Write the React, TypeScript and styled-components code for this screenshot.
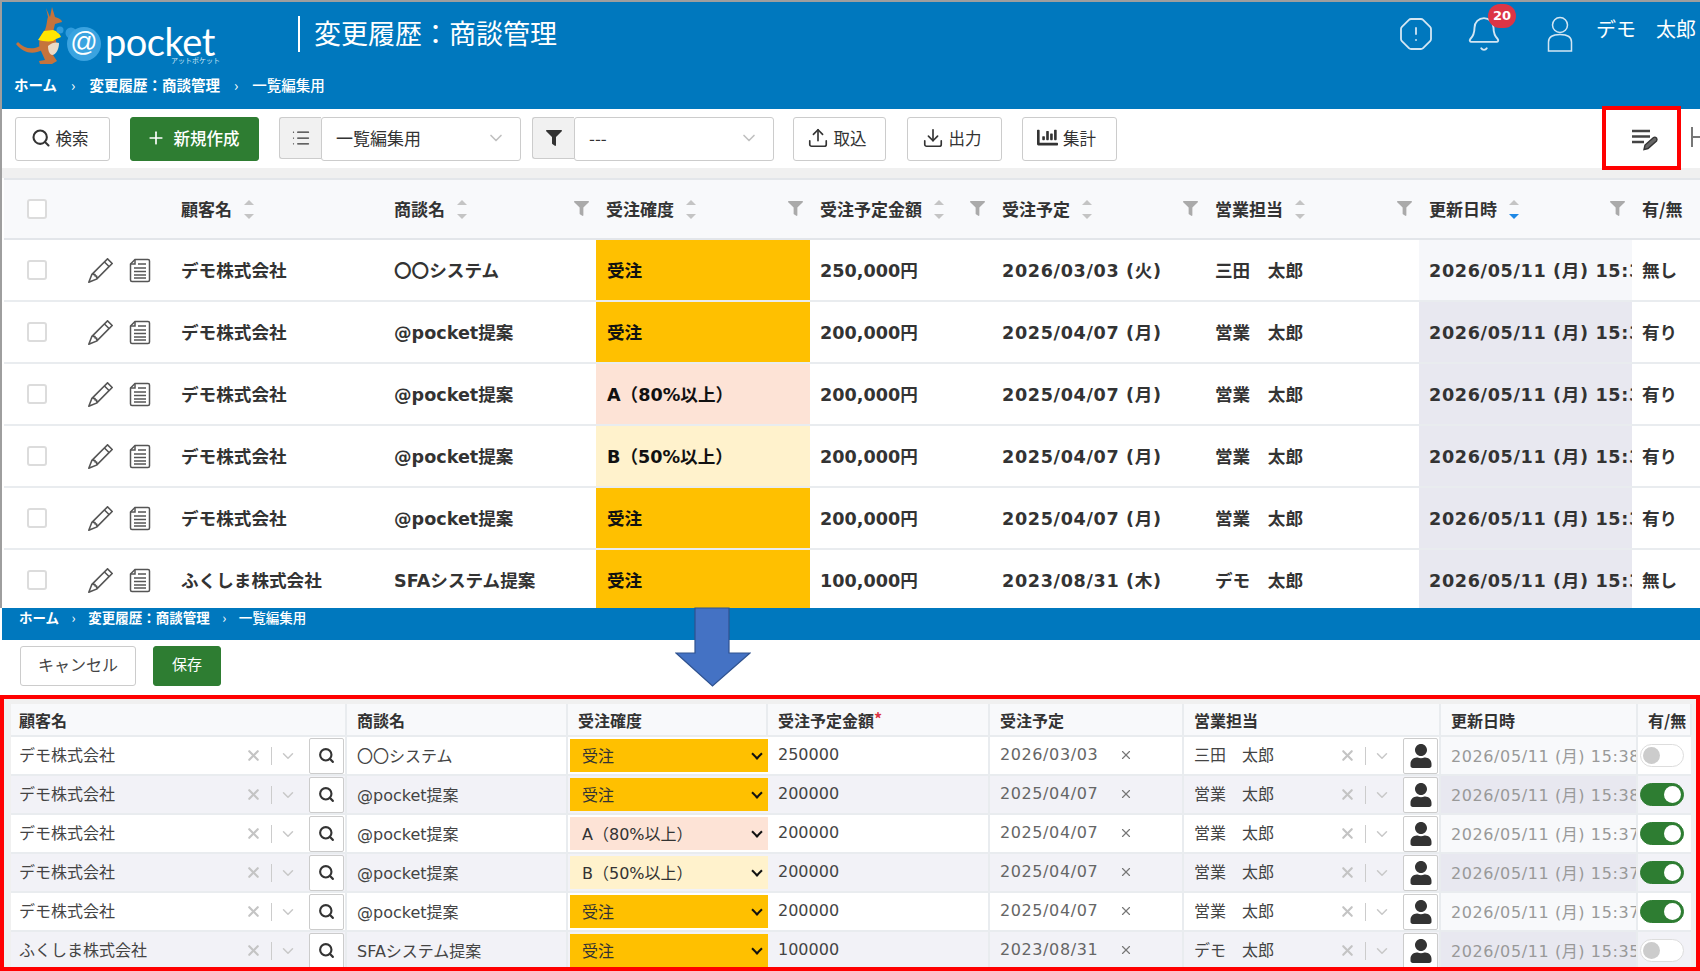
import { Bell, ChevronDown, Download, List, OctagonAlert, Plus, Search, Upload, X } from 'lucide-react'
import { BsPencil } from 'react-icons/bs'
import { FaChartBar, FaFilter, FaUser } from 'react-icons/fa'
import { createGlobalStyle, styled } from 'styled-components'

type Level = 'won' | 'a' | 'b'

const levelLabel: Record<Level, string> = { won: '受注', a: 'A（80%以上）', b: 'B（50%以上）' }
const levelColor: Record<Level, string> = { won: '#ffc000', a: '#fde3d6', b: '#fff2cc' }

const topRows = [
  { customer: 'デモ株式会社', deal: '〇〇システム', level: 'won', amount: '250,000円', date: '2026/03/03 (火)', owner: '三田　太郎', flag: '無し' },
  { customer: 'デモ株式会社', deal: '@pocket提案', level: 'won', amount: '200,000円', date: '2025/04/07 (月)', owner: '営業　太郎', flag: '有り' },
  { customer: 'デモ株式会社', deal: '@pocket提案', level: 'a', amount: '200,000円', date: '2025/04/07 (月)', owner: '営業　太郎', flag: '有り' },
  { customer: 'デモ株式会社', deal: '@pocket提案', level: 'b', amount: '200,000円', date: '2025/04/07 (月)', owner: '営業　太郎', flag: '有り' },
  { customer: 'デモ株式会社', deal: '@pocket提案', level: 'won', amount: '200,000円', date: '2025/04/07 (月)', owner: '営業　太郎', flag: '有り' },
  { customer: 'ふくしま株式会社', deal: 'SFAシステム提案', level: 'won', amount: '100,000円', date: '2023/08/31 (木)', owner: 'デモ　太郎', flag: '無し' },
] as const

const editRows = [
  { customer: 'デモ株式会社', deal: '〇〇システム', level: 'won', amount: '250000', date: '2026/03/03', owner: '三田　太郎', updated: '2026/05/11 (月) 15:38', on: false },
  { customer: 'デモ株式会社', deal: '@pocket提案', level: 'won', amount: '200000', date: '2025/04/07', owner: '営業　太郎', updated: '2026/05/11 (月) 15:38', on: true },
  { customer: 'デモ株式会社', deal: '@pocket提案', level: 'a', amount: '200000', date: '2025/04/07', owner: '営業　太郎', updated: '2026/05/11 (月) 15:37', on: true },
  { customer: 'デモ株式会社', deal: '@pocket提案', level: 'b', amount: '200000', date: '2025/04/07', owner: '営業　太郎', updated: '2026/05/11 (月) 15:37', on: true },
  { customer: 'デモ株式会社', deal: '@pocket提案', level: 'won', amount: '200000', date: '2025/04/07', owner: '営業　太郎', updated: '2026/05/11 (月) 15:37', on: true },
  { customer: 'ふくしま株式会社', deal: 'SFAシステム提案', level: 'won', amount: '100000', date: '2023/08/31', owner: 'デモ　太郎', updated: '2026/05/11 (月) 15:35', on: false },
] as const

const Kangaroo = () => (
  <svg width="72" height="62" viewBox="0 0 72 62">
    <path d="M1 39 C8 48 18 50 27 45 L25 41 C18 45 9 44 3 37 Z" fill="#c5733c" />
    <path d="M31 3 L35 12 L37 2 L40 12 C44 13 47 15 47 17 L40 19 L38 27 C42 34 43 44 38 50 L42 56 L37 59 L25 59 L24 56 L30 55 L26 46 C22 38 25 30 30 25 C32 20 32 14 33 12 Z" fill="#c5733c" />
    <path d="M29 26 L38 25 C42 26 45 29 46 32 L41 34 L38 36 C33 37 27 36 23 35 Z" fill="#ffe600" />
    <path d="M33 41 C37 37 42 37 44 38 C44 44 41 50 37 50 C34 49 33 45 33 41 Z" fill="#eadbc8" />
    <circle cx="45" cy="25" r="3.5" fill="#2f9bdc" />
    <circle cx="56" cy="28" r="5.5" fill="#2f9bdc" />
  </svg>
)

const DocIcon = () => (
  <svg width="22" height="25" viewBox="0 0 22 25" fill="none" stroke="#555" strokeWidth="1.5">
    <path d="M6 1.5 H19 Q20.5 1.5 20.5 3 V22 Q20.5 23.5 19 23.5 H3 Q1.5 23.5 1.5 22 V6 Z" />
    <path d="M6 1.5 V6 H1.5 M9 6 H17 M5 10 H17 M5 13.5 H17 M5 17 H17 M5 20 H17" />
  </svg>
)

const UserOutline = () => (
  <svg width="26" height="36" viewBox="0 0 26 36" fill="none" stroke="#d3e6f3" strokeWidth="1.5">
    <circle cx="13" cy="9" r="7.5" />
    <path d="M1.5 35 V26 C1.5 21 6 18.5 13 18.5 S24.5 21 24.5 26 V35 Z" />
  </svg>
)

// 一覧編集の切替アイコン
const ListEditIcon = () => (
  <svg width="28" height="24" viewBox="0 0 28 24" fill="none">
    <path d="M1 3 H19 M1 8.5 H19 M1 14 H13" stroke="#444" strokeWidth="2.4" />
    <path d="M13 21.5 L14 17 L22.5 9.5 Q24 8.5 25.5 10 Q26.5 11.5 25.5 13 L17 20.5 Z" fill="#666" stroke="#333" strokeWidth="1.4" />
  </svg>
)

const Sort = ({ active = false }: { active?: boolean }) => (
  <SortBox>
    <SortUp />
    <SortDown $active={active} />
  </SortBox>
)

const TopHead = ({ label, active, filter = true }: { label: string; active?: boolean; filter?: boolean }) => (
  <TopHeadCell>
    {label}
    <Sort active={active} />
    {filter && (
      <FilterMark>
        <FaFilter size={15} />
      </FilterMark>
    )}
  </TopHeadCell>
)

const Picker = ({ name, person = false }: { name: string; person?: boolean }) => (
  <PickerCell>
    <PickerText>{name}</PickerText>
    <X size={17} color="#c4c4c4" strokeWidth={3} />
    <PickerBar />
    <ChevronDown size={18} color="#c8c8c8" />
    <PickerButton>{person ? <FaUser size={24} color="#333" /> : <Search size={17} color="#333" strokeWidth={3} />}</PickerButton>
  </PickerCell>
)

function App() {
  return (
    <Page>
      <GlobalStyle />
      <TopSection>
        <Header>
          <HeaderMain>
            <Logo>
              <Kangaroo />
              <AtBadge>@</AtBadge>
              <LogoWord>pocket</LogoWord>
              <LogoKana>アットポケット</LogoKana>
            </Logo>
            <PageTitle>変更履歴：商談管理</PageTitle>
            <HeaderTools>
              <OctagonAlert size={36} color="#d3e6f3" strokeWidth={1.2} />
              <BellBox>
                <Bell size={38} color="#d3e6f3" strokeWidth={1.2} />
                <BellBadge>20</BellBadge>
              </BellBox>
              <UserOutline />
              <UserName>デモ　太郎</UserName>
            </HeaderTools>
          </HeaderMain>
          <Crumbs>
            <span>ホーム</span>
            <CrumbSep>›</CrumbSep>
            <span>変更履歴：商談管理</span>
            <CrumbSep>›</CrumbSep>
            <span>一覧編集用</span>
          </Crumbs>
        </Header>
        <Toolbar>
          <ToolButton $width={95}>
            <Search size={20} strokeWidth={2.5} />
            検索
          </ToolButton>
          <GreenButton>
            <Plus size={20} />
            新規作成
          </GreenButton>
          <SelectGroup>
            <SelectPrefix>
              <List size={20} strokeWidth={1.5} />
            </SelectPrefix>
            <SelectValue>
              一覧編集用
              <ChevronDown size={20} color="#c0c0c0" />
            </SelectValue>
          </SelectGroup>
          <SelectGroup>
            <SelectPrefix>
              <FaFilter size={16} color="#333" />
            </SelectPrefix>
            <SelectValue>
              ---
              <ChevronDown size={20} color="#c0c0c0" />
            </SelectValue>
          </SelectGroup>
          <ToolButton $width={93} $lead={8}>
            <Upload size={22} strokeWidth={1.8} />
            取込
          </ToolButton>
          <ToolButton $width={95} $lead={21}>
            <Download size={22} strokeWidth={1.8} />
            出力
          </ToolButton>
          <ToolButton $width={95} $lead={20}>
            <FaChartBar size={21} />
            集計
          </ToolButton>
          <EditToggle>
            <ListEditIcon />
          </EditToggle>
          <CollapseMark />
        </Toolbar>
        <GapStrip />
        <TopTable>
          <TopHeadRow>
            <TopHeadCheck>
              <CheckBox />
            </TopHeadCheck>
            <TopHead label="顧客名" filter={false} />
            <TopHead label="商談名" />
            <TopHead label="受注確度" />
            <TopHead label="受注予定金額" />
            <TopHead label="受注予定" />
            <TopHead label="営業担当" />
            <TopHead label="更新日時" active />
            <TopHeadCell>有/無</TopHeadCell>
          </TopHeadRow>
          {topRows.map((row, index) => (
            <TopRow key={index}>
              <RowActions>
                <CheckBox />
                <PencilSlot>
                  <BsPencil size={25} color="#555" />
                </PencilSlot>
                <DocIcon />
              </RowActions>
              <TopCell>{row.customer}</TopCell>
              <TopCell>{row.deal}</TopCell>
              <LevelCell $level={row.level}>{levelLabel[row.level]}</LevelCell>
              <TopCell>{row.amount}</TopCell>
              <TopDateCell>{row.date}</TopDateCell>
              <TopCell>{row.owner}</TopCell>
              <UpdatedCell $first={index === 0}>2026/05/11 (月) 15:38</UpdatedCell>
              <TopCell>{row.flag}</TopCell>
            </TopRow>
          ))}
        </TopTable>
      </TopSection>
      <EditBand>
        <span>ホーム</span>
        <BandSep>›</BandSep>
        <span>変更履歴：商談管理</span>
        <BandSep>›</BandSep>
        <span>一覧編集用</span>
      </EditBand>
      <EditBar>
        <CancelButton>キャンセル</CancelButton>
        <SaveButton>保存</SaveButton>
      </EditBar>
      <EditFrame>
        <EditHeadRow>
          <EditHeadCell>顧客名</EditHeadCell>
          <EditHeadCell>商談名</EditHeadCell>
          <EditHeadCell>受注確度</EditHeadCell>
          <EditHeadCell>
            受注予定金額<Required>*</Required>
          </EditHeadCell>
          <EditHeadCell>受注予定</EditHeadCell>
          <EditHeadCell>営業担当</EditHeadCell>
          <EditHeadCell>更新日時</EditHeadCell>
          <EditHeadCell>有/無</EditHeadCell>
        </EditHeadRow>
        {editRows.map((row, index) => (
          <EditRow key={index} $striped={index % 2 === 1}>
            <Picker name={row.customer} />
            <EditCell>{row.deal}</EditCell>
            <LevelSlot>
              <LevelSelect $level={row.level}>
                {levelLabel[row.level]}
                <SelectCaret />
              </LevelSelect>
            </LevelSlot>
            <EditCell>{row.amount}</EditCell>
            <DateCell>
              {row.date}
              <X size={14} color="#777" />
            </DateCell>
            <Picker name={row.owner} person />
            <ReadonlyCell $striped={index % 2 === 1}>{row.updated}</ReadonlyCell>
            <SwitchCell>
              <Switch $on={row.on}>
                <SwitchKnob $on={row.on} />
              </Switch>
            </SwitchCell>
          </EditRow>
        ))}
      </EditFrame>
      <ToggleCallout />
      <DownArrow width="76" height="80" viewBox="0 0 76 80">
        <path d="M20 1 H54 V46 H75 L37.5 79 L1 46 H20 Z" fill="#4472c4" stroke="#2f528f" strokeWidth="1.2" />
      </DownArrow>
    </Page>
  )
}

export default App

// #region styles

const GlobalStyle = createGlobalStyle`
  html, body {
    margin: 0;
    padding: 0;
    background: #fff;
    overflow: hidden;
  }
  * {
    box-sizing: border-box;
  }
`

const Page = styled.div`
  position: relative;
  width: 1700px;
  height: 971px;
  overflow: hidden;
  display: flex;
  flex-direction: column;
  color: #333;
  font-family: 'DejaVu Sans', 'Noto Sans CJK JP', sans-serif;
`

const TopSection = styled.div`
  height: 608px;
  overflow: hidden;
  flex: none;
  border-top: 2px solid #9e9e9e;
  border-left: 2px solid #9e9e9e;
`

const Header = styled.header`
  height: 107px;
  background: #0078be;
  color: #fff;
  display: flex;
  flex-direction: column;
`

const HeaderMain = styled.div`
  height: 68px;
  display: flex;
  align-items: center;
  padding-left: 13px;
`

const Logo = styled.div`
  position: relative;
  width: 283px;
  display: flex;
  align-items: flex-end;
  height: 62px;
`

const AtBadge = styled.span`
  width: 34px;
  height: 34px;
  margin: 0 0 6px -20px;
  border-radius: 50%;
  background: #3aa3e0;
  color: #fff;
  font: 400 27px/31px 'Liberation Sans', sans-serif;
  text-align: center;
`

const LogoWord = styled.span`
  margin: 0 0 11px 4px;
  font: 400 38px/30px 'Lato', sans-serif;
  letter-spacing: -0.5px;
`

const LogoKana = styled.span`
  position: absolute;
  left: 156px;
  bottom: 3px;
  font: 400 7px/7px 'Noto Sans CJK JP', sans-serif;
  color: #cfe6f5;
`

const PageTitle = styled.h1`
  margin: -4px 0 0;
  height: 36px;
  padding-left: 14px;
  border-left: 2px solid #fff;
  font: 400 27px/34px 'Noto Sans CJK JP', sans-serif;
`

const HeaderTools = styled.div`
  margin: -4px 0 0 auto;
  display: flex;
  align-items: center;
  gap: 0;
  white-space: nowrap;
`

const BellBox = styled.div`
  position: relative;
  display: flex;
  margin: 0 44px 0 31px;
`

const BellBadge = styled.span`
  position: absolute;
  top: -11px;
  right: -13px;
  width: 28px;
  height: 24px;
  border-radius: 12px;
  background: #dc3545;
  color: #fff;
  font: 700 13px/24px 'DejaVu Sans', sans-serif;
  text-align: center;
`

const UserName = styled.span`
  margin: -10px 4px 0 23px;
  font: 400 20px/28px 'Noto Sans CJK JP', sans-serif;
`

const Crumbs = styled.nav`
  display: flex;
  align-items: center;
  padding-left: 12px;
  height: 30px;
  font: 700 14.5px/20px 'Noto Sans CJK JP', sans-serif;
  & > span:last-child {
    font-weight: 500;
  }
`

const CrumbSep = styled.i`
  margin: 0 14px;
  font-style: normal;
  font-weight: 400;
`

const BandSep = styled(CrumbSep)`
  margin: 0 12.5px;
`

const Toolbar = styled.div`
  height: 59px;
  padding: 8px 0 0 13px;
  display: flex;
  align-items: flex-start;
  background: #fff;
  font: 400 16.5px/22px 'Noto Sans CJK JP', sans-serif;
`

const ToolButton = styled.button<{ $width: number; $lead?: number }>`
  width: ${(p) => p.$width}px;
  height: 44px;
  margin-left: ${(p) => p.$lead ?? 0}px;
  padding: 0 6px 3px 0;
  display: flex;
  align-items: center;
  justify-content: center;
  gap: 5px;
  background: #fff;
  border: 1px solid #ccc;
  border-radius: 3px;
  color: #333;
  font: inherit;
`

const GreenButton = styled.button`
  width: 129px;
  height: 44px;
  margin: 0 20px;
  padding: 0 4px 3px 0;
  display: flex;
  align-items: center;
  justify-content: center;
  gap: 8px;
  background: #2e7d32;
  border: 1px solid #2e7d32;
  border-radius: 3px;
  color: #fff;
  font: 500 16.5px/22px 'Noto Sans CJK JP', sans-serif;
`

const SelectGroup = styled.div`
  width: 242px;
  height: 44px;
  margin-right: 11px;
  display: flex;
`

const SelectPrefix = styled.div`
  width: 42px;
  height: 42px;
  display: flex;
  align-items: center;
  justify-content: center;
  background: #f1f1f1;
  border: 1px solid #ccc;
  border-right: 0;
  border-radius: 3px 0 0 3px;
`

const SelectValue = styled.div`
  flex: 1;
  display: flex;
  align-items: center;
  justify-content: space-between;
  padding: 0 14px 3px;
  border: 1px solid #ccc;
  border-radius: 3px;
  font-size: 17px;
`

const EditToggle = styled.div`
  margin-left: auto;
  padding-top: 11px;
  display: flex;
`

const CollapseMark = styled.span`
  width: 9px;
  height: 20px;
  margin: 10px 0 0 32px;
  border-left: 2px solid #777;
  background: linear-gradient(#777, #777) left center / 100% 2px no-repeat;
`

const GapStrip = styled.div`
  height: 10px;
  background: #f0f0f0;
`

const TopTable = styled.div`
  margin-left: 2px;
  font-weight: 700;
`

const topColumns = '167px 213px 212px 214px 182px 213px 214px 213px 68px'

const TopHeadRow = styled.div`
  height: 62px;
  display: grid;
  grid-template-columns: ${topColumns};
  background: #f8f9fb;
  border-top: 2px solid #e3e6ea;
  border-bottom: 2px solid #e3e6ea;
`

const TopHeadCheck = styled.div`
  display: flex;
  align-items: center;
  padding-left: 23px;
`

const TopHeadCell = styled.div`
  position: relative;
  display: flex;
  align-items: center;
  padding-left: 10px;
  font: 700 17px/20px 'Noto Sans CJK JP', sans-serif;
  color: #333;
  white-space: nowrap;
`

const SortBox = styled.span`
  display: inline-flex;
  flex-direction: column;
  gap: 9px;
  margin-left: 12px;
`

const SortUp = styled.span`
  border: 5px solid transparent;
  border-top: 0;
  border-bottom: 5px solid #c4c4c4;
`

const SortDown = styled.span<{ $active: boolean }>`
  border: 5px solid transparent;
  border-bottom: 0;
  border-top: 5px solid ${(p) => (p.$active ? '#1e88e5' : '#c4c4c4')};
`

const FilterMark = styled.span`
  position: absolute;
  right: 7px;
  top: 21px;
  color: #aaa;
  display: flex;
`

const TopRow = styled.div`
  height: 62px;
  display: grid;
  grid-template-columns: ${topColumns};
  border-bottom: 2px solid #e9ecef;
  background: #fff;
`

const RowActions = styled.div`
  display: flex;
  align-items: center;
  padding-left: 23px;
`

const CheckBox = styled.span`
  width: 20px;
  height: 20px;
  background: #fff;
  border: 2px solid #dcdcdc;
  border-radius: 3px;
`

const PencilSlot = styled.span`
  display: flex;
  margin: 0 16px 0 41px;
`

const TopCell = styled.div`
  display: flex;
  align-items: center;
  padding: 0 0 2px 10px;
  font-size: 17.6px;
  white-space: nowrap;
  overflow: hidden;
`

const TopDateCell = styled(TopCell)`
  letter-spacing: 0.65px;
`

const LevelCell = styled(TopCell)<{ $level: Level }>`
  padding-left: 11px;
  color: #111;
  background: ${(p) => levelColor[p.$level]};
`

const UpdatedCell = styled(TopDateCell)<{ $first: boolean }>`
  background: ${(p) => (p.$first ? '#f6f7fa' : '#e8e8f0')};
`

const EditBand = styled.div`
  height: 32px;
  flex: none;
  margin-left: 2px;
  padding: 0 0 14px 17px;
  display: flex;
  align-items: center;
  background: #0078be;
  color: #fff;
  font: 700 13.5px/18px 'Noto Sans CJK JP', sans-serif;
  & > span:last-child {
    font-weight: 500;
  }
`

const EditBar = styled.div`
  height: 55px;
  flex: none;
  margin-left: 2px;
  padding-top: 6px;
  padding-left: 18px;
  display: flex;
  align-items: flex-start;
  gap: 17px;
  background: #fff;
`

const CancelButton = styled.button`
  width: 116px;
  height: 40px;
  padding-bottom: 5px;
  background: #fff;
  border: 1px solid #ccc;
  border-radius: 3px;
  color: #444;
  font: 400 16px/22px 'Noto Sans CJK JP', sans-serif;
`

const SaveButton = styled.button`
  width: 68px;
  height: 40px;
  padding-bottom: 5px;
  background: #2e7d32;
  border: 1px solid #2e7d32;
  border-radius: 3px;
  color: #fff;
  font: 400 15px/20px 'Noto Sans CJK JP', sans-serif;
`

const EditFrame = styled.div`
  flex: 1;
  min-height: 0;
  overflow: hidden;
  padding: 5px 5px 0 7px;
  border: 4px solid #f00;
  background: #f0f0f0;
`

const editColumns = '336px 221px 200px 222px 194px 257px 197px 54px'

const EditHeadRow = styled.div`
  height: 33px;
  display: grid;
  grid-template-columns: ${editColumns};
  background: #f8f9fb;
  border-bottom: 2px solid #e9ecef;
`

const EditHeadCell = styled.div`
  display: flex;
  align-items: center;
  padding-left: 10px;
  border-right: 2px solid #e9ecef;
  font: 700 16px/20px 'Noto Sans CJK JP', sans-serif;
  white-space: nowrap;
  &:first-child {
    padding-left: 8px;
  }
`

const Required = styled.span`
  color: #dc3545;
  align-self: flex-start;
  margin-top: 4px;
`

const EditRow = styled.div<{ $striped: boolean }>`
  height: 39px;
  display: grid;
  grid-template-columns: ${editColumns};
  background: ${(p) => (p.$striped ? '#f2f2f7' : '#fff')};
  border-bottom: 2px solid #e9ecef;
`

const PickerCell = styled.div`
  display: flex;
  align-items: center;
  padding: 0 1px 0 10px;
  border-right: 2px solid #e9ecef;
  &:first-child {
    padding-left: 8px;
  }
`

const PickerText = styled.span`
  flex: 1;
  margin-top: -4px;
  font: 400 16px/22px 'Noto Sans CJK JP', sans-serif;
  color: #444;
`

const PickerBar = styled.span`
  width: 1px;
  height: 18px;
  margin: 0 7px 0 9px;
  background: #ccc;
`

const PickerButton = styled.span`
  width: 35px;
  height: 36px;
  margin-left: 12px;
  display: flex;
  align-items: center;
  justify-content: center;
  background: #fff;
  border: 1px solid #ccc;
  border-radius: 2px;
`

const EditCell = styled.div`
  display: flex;
  align-items: center;
  padding: 0 0 2px 10px;
  border-right: 2px solid #e9ecef;
  font-size: 16px;
  color: #444;
  white-space: nowrap;
  overflow: hidden;
`

const LevelSlot = styled.div`
  padding: 2px 0 2px 2px;
`

const LevelSelect = styled.div<{ $level: Level }>`
  height: 100%;
  display: flex;
  align-items: center;
  justify-content: space-between;
  padding: 0 5px 2px 12px;
  font-size: 16px;
  color: #333;
  background: ${(p) => levelColor[p.$level]};
`

const SelectCaret = styled.span`
  width: 8px;
  height: 8px;
  margin: -2px 2px 0 0;
  border-right: 2.5px solid #111;
  border-bottom: 2.5px solid #111;
  transform: rotate(45deg);
`

const DateCell = styled(EditCell)`
  gap: 21px;
  letter-spacing: 0.6px;
  color: #666;
`

const ReadonlyCell = styled(EditCell)<{ $striped: boolean }>`
  padding-left: 10px;
  letter-spacing: 0.6px;
  color: #999;
  background: ${(p) => (p.$striped ? '#e8e8f0' : '#f8f9fb')};
`

const SwitchCell = styled.div`
  display: flex;
  align-items: center;
  padding-left: 2px;
`

const Switch = styled.span<{ $on: boolean }>`
  width: 44px;
  height: 23px;
  padding: 2px;
  display: flex;
  justify-content: ${(p) => (p.$on ? 'flex-end' : 'flex-start')};
  border-radius: 12px;
  background: ${(p) => (p.$on ? '#2e7d32' : '#fff')};
  border: 1px solid ${(p) => (p.$on ? '#2e7d32' : '#ddd')};
`

const SwitchKnob = styled.span<{ $on: boolean }>`
  width: 17px;
  height: 17px;
  border-radius: 50%;
  background: ${(p) => (p.$on ? '#fff' : '#ccc')};
`

const ToggleCallout = styled.div`
  position: absolute;
  left: 1602px;
  top: 106px;
  width: 79px;
  height: 64px;
  border: 4px solid #f00;
`

const DownArrow = styled.svg`
  position: absolute;
  left: 675px;
  top: 607px;
`

// #endregion styles
